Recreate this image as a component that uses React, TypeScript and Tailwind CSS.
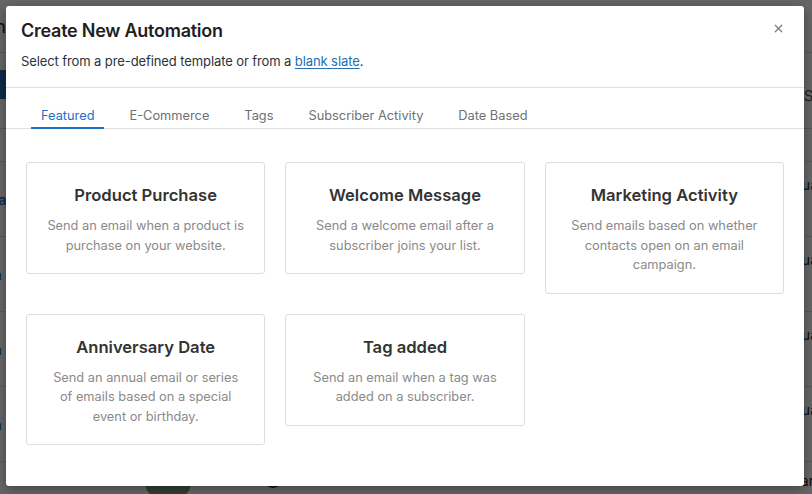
import { X } from "lucide-react";

const templates = [
  {
    title: "Product Purchase",
    lines: ["Send an email when a product is", "purchase on your website."],
  },
  {
    title: "Welcome Message",
    lines: ["Send a welcome email after a", "subscriber joins your list."],
  },
  {
    title: "Marketing Activity",
    lines: ["Send emails based on whether", "contacts open on an email", "campaign."],
  },
  {
    title: "Anniversary Date",
    lines: ["Send an annual email or series", "of emails based on a special", "event or birthday."],
  },
  {
    title: "Tag added",
    lines: ["Send an email when a tag was", "added on a subscriber."],
  },
];

const tabs = ["Featured", "E-Commerce", "Tags", "Subscriber Activity", "Date Based"];

function BackgroundPage() {
  // the list page sitting behind the dialog, mostly hidden
  const rows = [0, 1, 2, 3];
  return (
    <div className="h-full w-full bg-white text-[14px] text-[#1d2327]">
      <div className="flex h-[53px] items-center justify-between border-b border-[#dcdcde]">
        <div className="flex w-[6px] justify-end whitespace-nowrap text-[18px]">Automation</div>
      </div>
      <div className="flex h-[62px] items-center justify-between">
        <span className="h-[29px] w-[60px] -ml-[50px] bg-[#2271b1]" />
        <span className="-mr-[10px] mt-[24px] text-[15px] text-[#50575e]">Se</span>
      </div>
      <div className="h-[14px] border-b border-[#dcdcde]" />
      <div className="h-[33px] border-b border-[#dcdcde]" />
      {rows.map((r) => (
        <div key={r} className="flex h-[75px] items-center justify-between border-b border-[#dcdcde]">
          <span className="-ml-[14px] font-semibold text-[#2271b1]">{r === 0 ? "ma" : "sa"}</span>
          <div className="-mr-[6px] flex flex-col leading-[29px] text-[#1d2327]">
            <span>Janua</span>
            <span>ry</span>
          </div>
        </div>
      ))}
      <div className="relative flex h-[40px] items-start">
        <span className="ml-[145px] mt-[6px] h-[30px] w-[46px] rounded-full bg-[#7f9a88]" />
        <span className="ml-[72px] mt-[6px] h-[20px] w-[20px] rounded-full border-4 border-[#333]" />
        <span className="ml-auto mt-[8px] mr-[-10px] whitespace-nowrap text-[14px]">
          <span className="text-[#8c8f94]">Created</span> February
        </span>
      </div>
    </div>
  );
}

export default function App() {
  return (
    <div
      className="relative h-[494px] w-[812px] overflow-hidden"
      style={{ fontFamily: "Inter, 'Noto Sans', sans-serif" }}
    >
      <BackgroundPage />
      <div className="absolute inset-0 bg-black/60" />

      <div className="absolute left-[6px] top-[6px] w-[798px] rounded-[3px] bg-white shadow-[0_3px_12px_rgba(0,0,0,0.35)]">
        <div className="relative px-[15px] pt-[13px] pb-[16px]">
          <h1 className="text-[18px] font-semibold leading-[24px] tracking-[-0.25px] text-[#1e1e1e]">
            Create New Automation
          </h1>
          <p className="mt-[8px] text-[13px] leading-5 tracking-[-0.1px] text-[#2c3338]">
            Select from a pre-defined template or from a{" "}
            <a href="#" className="text-[#2271b1] underline underline-offset-2">
              blank slate
            </a>
            .
          </p>
          <button className="absolute right-[19px] top-[16px] text-[#787c82]">
            <X size={13} strokeWidth={2.2} />
          </button>
        </div>

        <div className="flex border-y border-[#e0e0e0] pl-[25px] pt-[18px]">
          {tabs.map((t, i) => (
            <div
              key={t}
              className={`-mb-px mr-[15px] border-b-2 px-[10px] pb-[1px] text-[12.8px] leading-5 ${
                i === 0 ? "border-[#1e6fc6] text-[#1e6fc6]" : "border-transparent text-[#6e7175]"
              }`}
            >
              {t}
            </div>
          ))}
        </div>

        <div className="grid grid-cols-3 items-start gap-x-5 gap-y-5 px-5 pt-[33px] pb-[41px]">
          {templates.map((tpl) => (
            <div
              key={tpl.title}
              className="rounded-[3px] border border-[#dddddd] px-3 pt-[20px] pb-[18px] text-center"
            >
              <h3 className="text-[16.6px] font-semibold leading-6 text-[#333333]">{tpl.title}</h3>
              <p className="mt-[9px] whitespace-nowrap text-[12.8px] leading-[19.5px] text-[#8a8a8a]">
                {tpl.lines.map((l, i) => (
                  <span key={i} className="block">
                    {l}
                  </span>
                ))}
              </p>
            </div>
          ))}
        </div>
      </div>
    </div>
  );
}
